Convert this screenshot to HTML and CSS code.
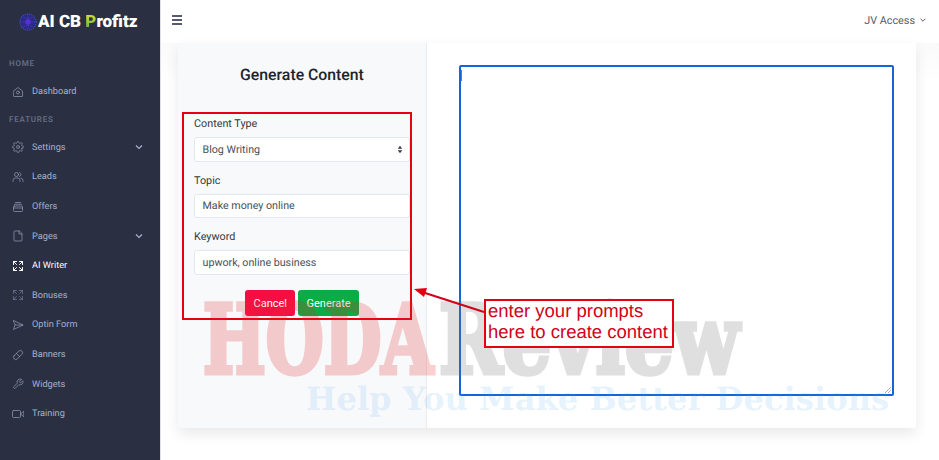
FILE: index.html
```html
<!DOCTYPE html>
<html lang="en">
<head>
  <meta charset="UTF-8" />
  <title>AI CB Profitz - AI Writer</title>
  <link rel="stylesheet" href="styles.css">
</head>
<body>
  <div class="page">
    <!-- sidebar -->
    <aside class="sidebar">
      <div class="logo">
        <svg class="logo-globe" viewBox="0 0 20 20" width="18" height="18">
          <circle cx="10" cy="10" r="9" fill="#2b2a86"/>
          <circle cx="10" cy="10" r="9" fill="none" stroke="#4a55c9" stroke-width="1.2" stroke-dasharray="1 1.4"/>
          <path d="M1 10h18M10 1v18M4 4.500q6 3 12 0M4 15.500q6-3 12 0" fill="none" stroke="#4f46e5" stroke-width=".8" stroke-dasharray="1 1"/>
          <circle cx="10" cy="10" r="3" fill="#5b2fd6"/>
        </svg>
        <span class="logo-text">AI CB <span class="logo-p">P</span>rofitz</span>
      </div>

      <div class="nav-title nav-title-first">HOME</div>
      <a class="nav-item">
        <svg class="nav-icon" viewBox="0 0 24 24"><path d="M3 10l9-7 9 7v10a1 1 0 0 1-1 1H4a1 1 0 0 1-1-1z"/><circle cx="12" cy="13" r="3"/></svg>
        Dashboard
      </a>

      <div class="nav-title">FEATURES</div>
      <a class="nav-item">
        <svg class="nav-icon" viewBox="0 0 24 24"><circle cx="12" cy="12" r="3"/><path d="M19.400 15a1.700 1.700 0 0 0 .3 1.800l.1.100a2 2 0 1 1-2.800 2.800l-.1-.1a1.700 1.700 0 0 0-2.900 1.200V21a2 2 0 1 1-4 0v-.1a1.700 1.700 0 0 0-2.900-1.200l-.1.100a2 2 0 1 1-2.800-2.800l.1-.1a1.700 1.700 0 0 0-1.200-2.900H3a2 2 0 1 1 0-4h.1a1.700 1.700 0 0 0 1.200-2.900l-.1-.1a2 2 0 1 1 2.800-2.800l.1.100a1.700 1.700 0 0 0 2.900-1.200V3a2 2 0 1 1 4 0v.1a1.700 1.700 0 0 0 2.900 1.200l.1-.1a2 2 0 1 1 2.800 2.800l-.1.100a1.700 1.700 0 0 0 1.200 2.900h.1a2 2 0 1 1 0 4h-.1a1.700 1.700 0 0 0-1.500 1z"/></svg>
        Settings
        <svg class="nav-caret" viewBox="0 0 10 10"><path d="M2 3.500l3 3 3-3"/></svg>
      </a>
      <a class="nav-item">
        <svg class="nav-icon" viewBox="0 0 24 24"><circle cx="9" cy="7" r="4"/><path d="M2 21v-2a5 5 0 0 1 5-5h4a5 5 0 0 1 5 5v2M15 3.200a4 4 0 0 1 0 7.600M18 14.200a5 5 0 0 1 4 4.800v2"/></svg>
        Leads
      </a>
      <a class="nav-item">
        <svg class="nav-icon" viewBox="0 0 24 24"><rect x="3" y="10" width="18" height="11" rx="1.500"/><path d="M3 14h18M5 6.500h14M7 3h10"/></svg>
        Offers
      </a>
      <a class="nav-item">
        <svg class="nav-icon" viewBox="0 0 24 24"><path d="M14 2H6a2 2 0 0 0-2 2v16a2 2 0 0 0 2 2h12a2 2 0 0 0 2-2V8z"/><path d="M14 2v6h6"/></svg>
        Pages
        <svg class="nav-caret" viewBox="0 0 10 10"><path d="M2 3.500l3 3 3-3"/></svg>
      </a>
      <a class="nav-item nav-item-active">
        <svg class="nav-icon" viewBox="0 0 24 24"><path d="M3 9V3h6M21 9V3h-6M3 15v6h6M21 15v6h-6M3 3l6 6M21 3l-6 6M3 21l6-6M21 21l-6-6"/></svg>
        AI Writer
      </a>
      <a class="nav-item nav-item-dim">
        <svg class="nav-icon" viewBox="0 0 24 24"><path d="M3 9V3h6M21 9V3h-6M3 15v6h6M21 15v6h-6M3 3l6 6M21 3l-6 6M3 21l6-6M21 21l-6-6"/></svg>
        Bonuses
      </a>
      <a class="nav-item">
        <svg class="nav-icon" viewBox="0 0 24 24"><path d="M3 3l19 9-19 9 3-9zM6 12h16"/></svg>
        Optin Form
      </a>
      <a class="nav-item">
        <svg class="nav-icon" viewBox="0 0 24 24"><rect x="1" y="7.500" width="22" height="9" rx="4.500" transform="rotate(-45 12 12)"/><path d="M8.500 8.500l7 7"/></svg>
        Banners
      </a>
      <a class="nav-item">
        <svg class="nav-icon" viewBox="0 0 24 24"><path d="M14.700 6.300a1 1 0 0 0 0 1.400l1.600 1.600a1 1 0 0 0 1.400 0l3.800-3.800a6 6 0 0 1-7.900 7.900l-6.900 6.900a2.100 2.100 0 0 1-3-3l6.900-6.900a6 6 0 0 1 7.900-7.900z"/></svg>
        Widgets
      </a>
      <a class="nav-item">
        <svg class="nav-icon" viewBox="0 0 24 24"><rect x="1" y="5" width="16" height="14" rx="2"/><path d="M23 7l-6 5 6 5z"/></svg>
        Training
      </a>
    </aside>

    <!-- main area -->
    <div class="main">
      <header class="topbar">
        <div class="burger"><span></span><span></span><span></span></div>
        <div class="user">JV Access
          <svg class="user-caret" viewBox="0 0 10 10"><path d="M2 3.500l3 3 3-3"/></svg>
        </div>
      </header>

      <div class="content">
        <div class="card">
          <div class="card-left">
            <h2 class="card-title">Generate Content</h2>
            <form class="gen-form">
              <label class="field-label">Content Type</label>
              <div class="field field-select">Blog Writing
                <svg class="select-arrows" viewBox="0 0 8 12"><path d="M4 1l3 4H1zM4 11L1 7h6z"/></svg>
              </div>
              <label class="field-label">Topic</label>
              <div class="field">Make money online</div>
              <label class="field-label">Keyword</label>
              <div class="field">upwork, online business</div>
              <div class="form-btns">
                <button type="button" class="btn btn-cancel">Cancel</button>
                <button type="button" class="btn btn-generate">Generate</button>
              </div>
            </form>
          </div>
          <div class="card-right">
            <div class="editor">
              <span class="caret"></span>
              <svg class="grip" viewBox="0 0 8 8"><path d="M1 7l6-6M4 7l3-3"/></svg>
            </div>
          </div>
        </div>
      </div>
    </div>

    <!-- watermark and callout lie over the page -->
    <div class="watermark">
      <span class="wm-word wm-red">HODA</span>
      <span class="wm-word wm-grey">Review</span>
    </div>
    <div class="wm-sub">Help You Make Better Decisions</div>
    <svg class="callout-arrow" viewBox="0 0 80 30" width="80" height="30">
      <path d="M70 24L8 4" />
      <polygon points="0,1 13,0 10,9" />
    </svg>
    <div class="callout"><span class="callout-text">enter your prompts<br>here to create content</span></div>
  </div>
</body>
</html>
```

FILE: styles.css
```css
* {
  box-sizing: border-box;
}
html, body {
  margin: 0;
  height: 100%;
  overflow: hidden;
}
body {
  font-family: Roboto, "Liberation Sans", sans-serif;
  font-size: 11px;
  color: #495057;
  background-color: #fff;
  text-rendering: geometricPrecision;
}
.page {
  position: relative;
  display: flex;
  width: 939px;
  height: 460px;
}

/* sidebar */
.sidebar {
  width: 161px;
  flex-shrink: 0;
  background-color: #2a3042;
  color: #a0aac4;
  border-right: 1px solid #dfe1e6;
}
.logo {
  display: flex;
  align-items: center;
  height: 43px;
  padding-left: 19px;
}
.logo-globe {
  margin-right: 1px;
}
.logo-text {
  font-size: 17px;
  font-weight: 900;
  color: #fff;
  white-space: nowrap;
}
.logo-p {
  color: transparent;
  background: linear-gradient(#f2e02a, #39b54a);
  -webkit-background-clip: text;
  background-clip: text;
}
.nav-title {
  height: 14px;
  margin: 6px 0 6px 9px;
  font-size: 8px;
  line-height: 14px;
  font-weight: 500;
  letter-spacing: .8px;
  color: #6a7187;
}
.nav-title-first {
  margin-top: 14px;
  margin-bottom: 6px;
}
.nav-item {
  display: flex;
  align-items: center;
  height: 29.600px;
  padding-left: 12px;
  font-size: 9.200px;
  font-weight: 400;
  color: #a6b0cf;
}
.nav-item-active {
  color: #fff;
}
.nav-item-dim .nav-icon {
  opacity: .55;
}
.nav-icon {
  width: 12px;
  height: 12px;
  margin-right: 8px;
  fill: none;
  stroke: currentColor;
  stroke-width: 1.500;
  stroke-linejoin: round;
  stroke-linecap: round;
  opacity: .8;
}
.nav-item-active .nav-icon {
  opacity: 1;
  stroke-width: 2;
}
.nav-caret {
  width: 10px;
  height: 10px;
  margin-left: auto;
  margin-right: 16px;
  fill: none;
  stroke: currentColor;
  stroke-width: 1.200;
}

/* topbar */
.main {
  flex-grow: 1;
  display: flex;
  flex-direction: column;
}
.topbar {
  display: flex;
  justify-content: space-between;
  align-items: center;
  height: 43px;
  padding: 0 12px 3px 11px;
  background-color: #fff;
}
.burger {
  display: flex;
  flex-direction: column;
  gap: 2px;
  width: 10px;
}
.burger span {
  display: block;
  height: 2px;
  background-color: #555b6d;
}
.user {
  display: flex;
  align-items: center;
  font-size: 10.800px;
  color: #555b6d;
}
.user-caret {
  width: 8px;
  height: 8px;
  margin-left: 4px;
  fill: none;
  stroke: currentColor;
  stroke-width: 1.200;
}

/* card */
.content {
  flex-grow: 1;
  padding: 0 23px 32px 17px;
  background: linear-gradient(#fafafa, #fff 40px);
}
.card {
  display: flex;
  height: 385px;
  background-color: #fff;
  border-radius: 0 0 3px 3px;
  box-shadow: 0 6px 14px rgba(0, 0, 0, .09);
}
.card-left {
  width: 249px;
  padding: 0 4px;
  background-color: #f8f9fa;
  border-right: 1px solid #e9ebee;
}
.card-title {
  margin: 22px 0 0 0;
  text-align: center;
  font-size: 15.800px;
  line-height: 19px;
  font-weight: 500;
  color: #212529;
}
.gen-form {
  width: 230px;
  height: 208px;
  margin-top: 28px;
  padding: 3px 0 0 10px;
  border: 2px solid #e60012;
}
.field-label {
  display: block;
  height: 14px;
  margin-bottom: 6px;
  font-size: 10.800px;
  line-height: 14px;
  font-weight: 400;
  color: #343a40;
}
.field {
  display: flex;
  align-items: center;
  justify-content: space-between;
  width: 216px;
  height: 24.600px;
  margin-bottom: 12px;
  padding: 0 7.500px;
  font-size: 10.700px;
  color: #495057;
  background-color: #fff;
  border: 1px solid #e4e7ee;
  border-radius: 3px;
}
.select-arrows {
  width: 6px;
  height: 9px;
  margin-right: -1px;
  fill: #343a40;
}
.form-btns {
  display: flex;
  justify-content: center;
  gap: 3px;
  margin-top: 15.500px;
}
.btn {
  height: 26px;
  padding: 0 8.500px;
  font-family: inherit;
  font-size: 11px;
  color: #fff;
  border: none;
  border-radius: 3px;
}
.btn-cancel {
  width: 50px;
  background-color: #f40f43;
}
.btn-generate {
  width: 61px;
  background-color: #09ad43;
}
.card-right {
  flex-grow: 1;
  padding: 22px 22px 32px 32px;
}
.editor {
  position: relative;
  height: 331px;
  background-color: #fff;
  border: 2px solid #1565d8;
  border-radius: 2px;
}
.caret {
  position: absolute;
  left: 0;
  top: 3px;
  width: 1px;
  height: 11px;
  background-color: #777;
}
.grip {
  position: absolute;
  right: 0;
  bottom: 0;
  width: 8px;
  height: 8px;
  fill: none;
  stroke: #999;
  stroke-width: .8;
}

/* watermark */
.watermark {
  position: absolute;
  left: 203px;
  top: 305px;
  display: flex;
  width: 541px;
  height: 72px;
  pointer-events: none;
  opacity: .22;
}
.wm-word {
  display: block;
  min-width: 0;
  font-family: "DejaVu Serif", serif;
  font-size: 95px;
  line-height: 72px;
  font-weight: 700;
  white-space: nowrap;
  -webkit-text-stroke: 5px currentColor;
  transform-origin: left top;
}
.wm-red {
  flex: 0 0 236px;
  color: #e6282d;
  transform: scaleX(.7);
}
.wm-grey {
  flex: 0 0 305px;
  color: #707070;
  transform: scaleX(.805);
}
.wm-sub {
  position: absolute;
  left: 306px;
  top: 380px;
  font-family: "DejaVu Serif", serif;
  font-size: 32.200px;
  line-height: 38px;
  font-weight: 700;
  white-space: nowrap;
  color: rgba(70, 160, 235, .15);
  pointer-events: none;
}

/* callout */
.callout {
  position: absolute;
  left: 484px;
  top: 299px;
  width: 190px;
  height: 49px;
  padding: 0 2px;
  font-family: "Liberation Sans", sans-serif;
  font-size: 18.500px;
  line-height: 21px;
  white-space: nowrap;
  color: #d0021b;
  background-color: #fff;
  border: 2px solid #e60012;
}
.callout-text {
  display: block;
  margin-top: -1.500px;
}
.callout-arrow {
  position: absolute;
  left: 414px;
  top: 288px;
  fill: #e00012;
  stroke: none;
}
.callout-arrow path {
  fill: none;
  stroke: #d0021b;
  stroke-width: 2;
}
```
